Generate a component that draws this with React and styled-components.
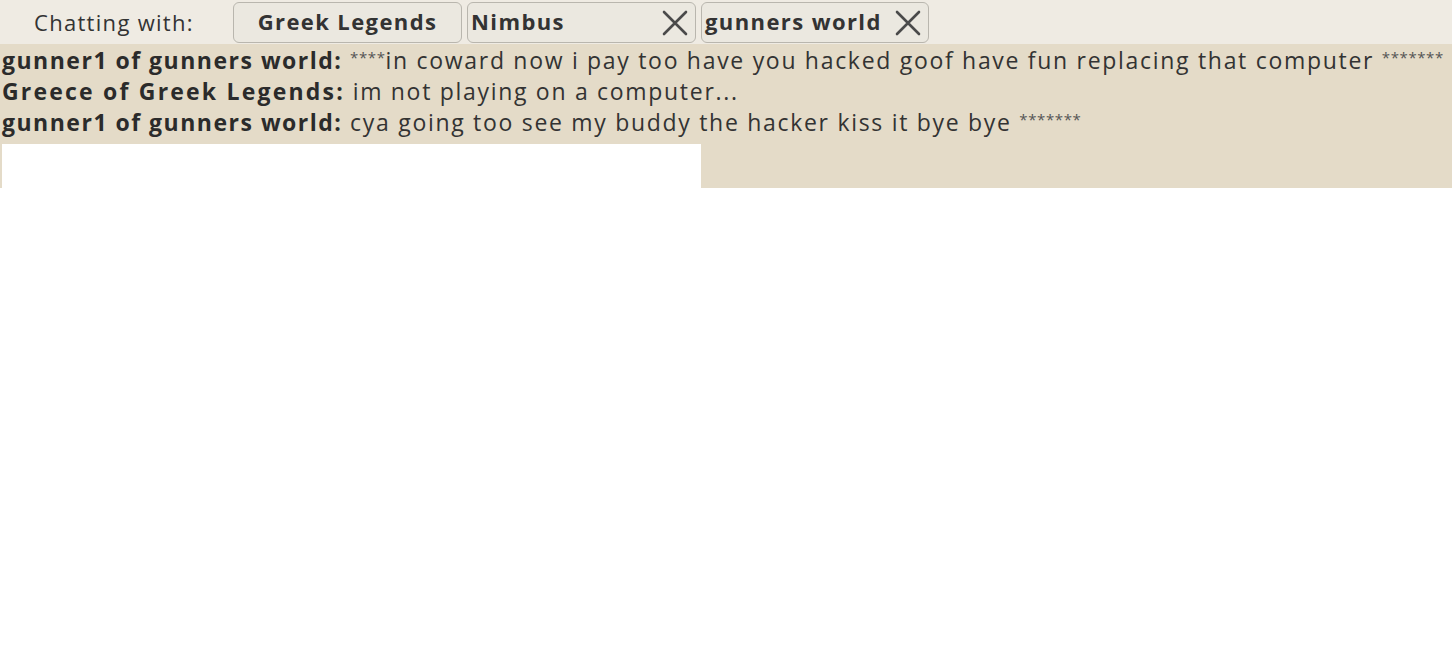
import React from "react";
import styled, { createGlobalStyle } from "styled-components";

const GlobalStyle = createGlobalStyle`
  html, body {
    margin: 0;
    padding: 0;
    background: #ffffff;
    font-family: "Open Sans", "Liberation Sans", sans-serif;
  }
`;

const ChatPanel = styled.div`
  width: 1452px;
  display: flex;
  flex-direction: column;
`;

const TopBar = styled.div`
  height: 44px;
  background: #efebe3;
  display: flex;
  align-items: center;
  box-sizing: border-box;
  padding: 2px 0 1px 34px;
  gap: 5px;
`;

const Label = styled.span`
  font-size: 22px;
  color: #333;
  width: 194px;
  letter-spacing: 1.3px;
  padding-bottom: 2px;
`;

const Tab = styled.div`
  box-sizing: border-box;
  width: ${(p) => p.w}px;
  height: 41px;
  border: 1px solid #b9b6ae;
  border-radius: 6px;
  background: #ebe8e0;
  display: flex;
  align-items: center;
  justify-content: ${(p) => (p.center ? "center" : "space-between")};
  padding: 0 ${(p) => (p.center ? 0 : 6)}px 3px ${(p) => (p.center ? 0 : 3)}px;
  font-size: 22px;
  font-weight: 700;
  color: #333;
  letter-spacing: 1.4px;
`;

const Close = styled.svg`
  width: 28px;
  height: 28px;
  flex-shrink: 0;
  margin-top: 3px;
`;

const Messages = styled.div`
  background: #e4dbc8;
  padding: 1px 0 0 2px;
  height: 144px;
  box-sizing: border-box;
  display: flex;
  flex-direction: column;
`;

const Line = styled.div`
  font-size: 23px;
  line-height: 31px;
  height: 31px;
  color: #333;
  white-space: nowrap;
  letter-spacing: 1.7px;
`;

const Who = styled.b`
  font-weight: 700;
  color: #2b2b2b;
  letter-spacing: ${(p) => (p.caps ? 2.2 : 1.5)}px;
`;

const Stars = styled.span`
  font-size: 15px;
  line-height: 0;
  vertical-align: 6px;
  color: #555;
  letter-spacing: 0.6px;
`;

const Input = styled.div`
  margin-top: 6px;
  width: 699px;
  height: 44px;
  background: #fff;
`;

const X = () => (
  <Close viewBox="0 0 28 28">
    <path d="M3 3 L25 25 M25 3 L3 25" stroke="#4a4a4a" strokeWidth="2.6" strokeLinecap="round" />
  </Close>
);

const messages = [
  { who: "gunner1 of gunners world:", pre: "****", text: "in coward now i pay too have you hacked goof have fun replacing that computer ", post: "*******" },
  { who: "Greece of Greek Legends:", caps: true, text: "im not playing on a computer..." },
  { who: "gunner1 of gunners world:", text: "cya going too see my buddy the hacker kiss it bye bye ", post: "*******" },
];

export default function App() {
  return (
    <ChatPanel>
      <GlobalStyle />
      <TopBar>
        <Label>Chatting with:</Label>
        <Tab w={229} center>Greek Legends</Tab>
        <Tab w={229}>Nimbus<X /></Tab>
        <Tab w={228}>gunners world<X /></Tab>
      </TopBar>
      <Messages>
        {messages.map((m, i) => (
          <Line key={i}>
            <Who caps={m.caps}>{m.who}</Who>{" "}
            {m.pre && <Stars>{m.pre}</Stars>}
            {m.text}
            {m.post && <Stars>{m.post}</Stars>}
          </Line>
        ))}
        <Input />
      </Messages>
    </ChatPanel>
  );
}
